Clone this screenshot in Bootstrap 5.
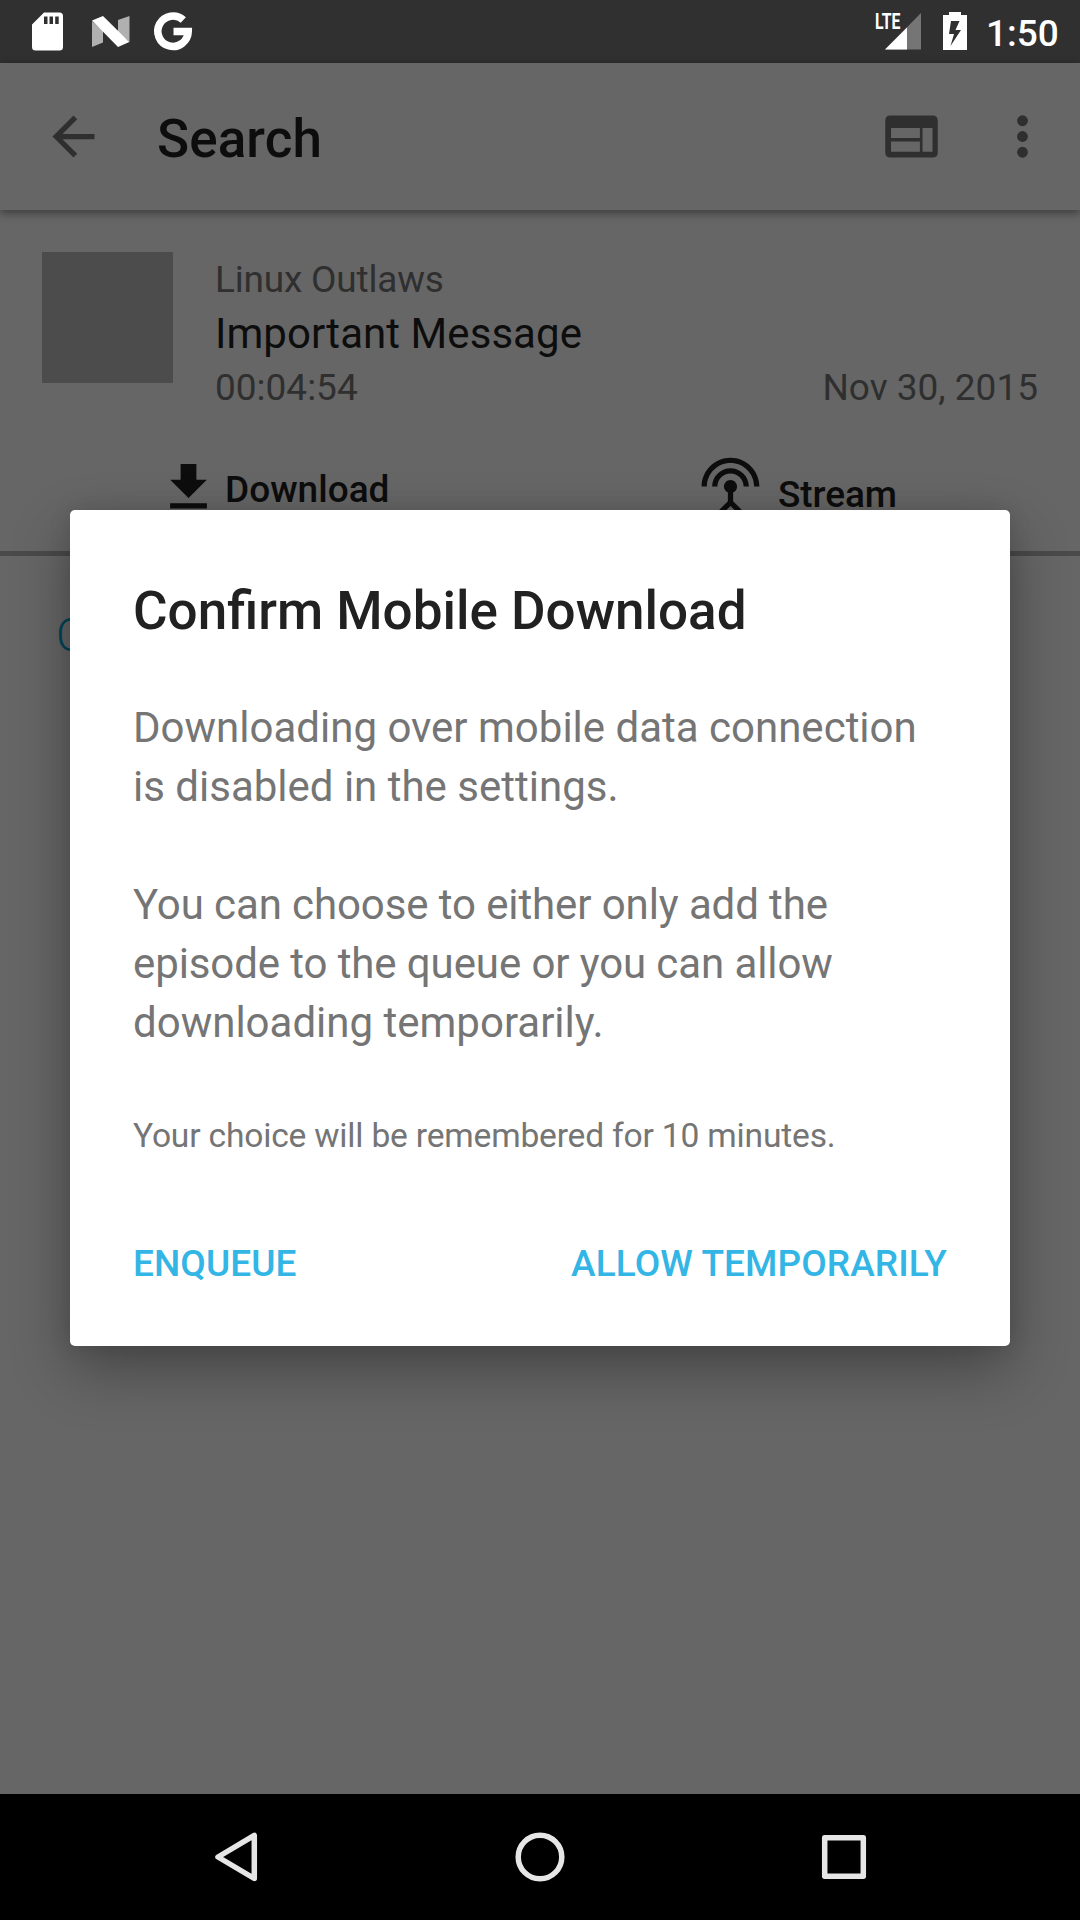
<!DOCTYPE html>
<html lang="en">
<head>
<meta charset="utf-8">
<meta name="viewport" content="width=device-width, initial-scale=1">
<title>Confirm Mobile Download</title>
<link rel="stylesheet" href="https://cdn.jsdelivr.net/npm/bootstrap@5.3.0/dist/css/bootstrap.min.css">
<style>
  body { width: 1080px; height: 1920px; overflow: hidden; background: #666; font-family: Roboto, sans-serif; color: #0d0d0d; }
  svg { display: block; flex: none; }
  .status-bar { height: 63px; background: #303030; color: #fff; padding: 0 20px 0 32px; }
  .clock { width: 74px; font-size: 37px; font-weight: 500; line-height: 43px; padding-top: 3px; margin-left: 19px; white-space: nowrap; }
  .lte { font-family: Roboto, sans-serif; }
  .app-bar { height: 147px; padding: 0 26px 0 42px; background: #666; box-shadow: 0 3px 9px rgba(0,0,0,.42); color: #2f2f2f; z-index: 1; }
  .app-title { font-size: 53px; font-weight: 500; line-height: 62px; margin: 4px 0 0 52px; color: #0d0d0d; letter-spacing: .1px; }
  .menu-dots { margin-left: 48px; }
  .episode { height: 346px; padding: 42px 42px 0; border-bottom: 5px solid #4a4a4a; }
  .cover { width: 131px; height: 131px; background: #4c4c4c; }
  .meta { padding: 6px 0 0 42px; font-size: 37px; line-height: 43px; color: #2f2f2f; }
  .meta-feed { letter-spacing: -.2px; }
  .meta-title { font-size: 42px; line-height: 50px; margin: 8px 0 7px; color: #0d0d0d; letter-spacing: .06px; }
  .actions { margin: 47px -42px 0; font-size: 37px; font-weight: 500; line-height: 43px; }
  .act-download { padding-left: 157px; }
  .act-download span { padding: 12px 0 0 5px; }
  .act-stream { padding-left: 159px; }
  .act-stream svg { margin-top: -1px; }
  .act-stream span { padding: 17px 0 0 16px; letter-spacing: -.1px; }
  .more { font-size: 46px; font-weight: 300; line-height: 54px; padding: 52px 0 0 56px; color: #00455a; }
  .screen { height: 1731px; }
  .overlay { position: absolute; inset: 63px 0 126px; padding-bottom: 1px; z-index: 5; }
  .dialog { width: 940px; height: 836px; padding: 70px 63px 0; background: #fff; border-radius: 5px; color: #757575; box-shadow: 0 24px 60px rgba(0,0,0,.32), 0 0 22px rgba(0,0,0,.12); }
  .dialog-title { font-size: 53px; font-weight: 500; line-height: 62px; margin: 0 0 56px; color: #212121; }
  .dialog-text { font-size: 42px; line-height: 59px; margin: 0 0 59px; }
  .dialog-note { font-size: 33.6px; line-height: 40px; margin: 64px 0 86px; letter-spacing: -.19px; }
  .dialog-btn { border: 0; background: none; padding: 0; color: #33b5e5; font-size: 37px; font-weight: 500; line-height: 44px; letter-spacing: .1px; text-transform: uppercase; }
  .tight { letter-spacing: -.1px; }
  .nav-keys { height: 126px; background: #000; }
</style>
</head>
<body>
<header class="status-bar d-flex align-items-center">
  <svg width="170" height="63" viewBox="32 0 170 63">
    <path fill="#fff" fill-rule="evenodd" d="M44 12.500H59.500Q63 12.500 63 16V47Q63 50.500 59.500 50.500H35.500Q32 50.500 32 47V24.500ZM44 16.500V24H47.500V16.500ZM49.500 16.500V24H53V16.500ZM55.200 16.500V24H58.700V16.500Z"/>
    <path fill="#b0b0b0" d="M92 21 103 31V42.500L92 47ZM118 20 129.500 16V42L118 32Z"/>
    <path fill="#fff" d="M92 20.500 103 16 129.300 42 118 47Z"/>
    <path fill="none" stroke="#fff" stroke-width="7.600" d="M183.300 20A15.200 15.200 0 1 0 188.200 31.500H173.500"/>
  </svg>
  <svg class="ms-auto" width="92" height="63" viewBox="875 0 92 63">
    <path fill="#757575" d="M921 13V49.500H885Z"/>
    <path fill="#fff" d="M907 27.500V49.500H885Z"/>
    <path fill="#303030" d="M874 10H901V31H874Z"/>
    <text class="lte" x="875" y="29.300" font-size="22.500" font-weight="700" textLength="25.500" lengthAdjust="spacingAndGlyphs" fill="#fff">LTE</text>
    <path fill="#fff" fill-rule="evenodd" d="M949 12H961V15H967V50H943V15H949ZM951 21 949 34H954L950.500 46 961 30H955.500L959.500 21Z"/>
  </svg>
  <span class="clock">1:50</span>
</header>

<main class="screen">
  <nav class="app-bar d-flex align-items-center position-relative">
    <svg width="63" height="63" viewBox="0 0 24 24" fill="currentColor"><path d="M20 11H7.830l5.590-5.590L12 4l-8 8 8 8 1.410-1.410L7.830 13H20v-2z"/></svg>
    <h1 class="app-title">Search</h1>
    <svg class="ms-auto" width="63" height="63" viewBox="0 0 24 24" fill="currentColor"><path fill-rule="evenodd" d="M4 4H20Q22 4 22 6V18Q22 20 20 20H4Q2 20 2 18V6Q2 4 4 4ZM4.200 8.800V12.600H15.200V8.800ZM4.200 13.900V17.800H15.200V13.900ZM16.200 8.800V17.800H20V8.800Z"/></svg>
    <svg class="menu-dots" width="63" height="63" viewBox="0 0 24 24" fill="currentColor"><circle cx="12" cy="6" r="2.050"/><circle cx="12" cy="12" r="2.050"/><circle cx="12" cy="18" r="2.050"/></svg>
  </nav>

  <section class="episode">
    <div class="d-flex">
      <div class="cover"></div>
      <div class="meta flex-grow-1">
        <div class="meta-feed">Linux Outlaws</div>
        <div class="meta-title">Important Message</div>
        <div class="d-flex justify-content-between"><span>00:04:54</span><span>Nov 30, 2015</span></div>
      </div>
    </div>
    <div class="actions row g-0">
      <div class="col-6 act-download d-flex">
        <svg width="63" height="63" viewBox="0 0 24 24" fill="currentColor"><path d="M19 9h-4V3H9v6H5l7 7 7-7zM5 18v2h14v-2H5z"/></svg>
        <span>Download</span>
      </div>
      <div class="col-6 act-stream d-flex">
        <svg width="63" height="63" viewBox="0 0 24 24" fill="currentColor"><path d="M12 5c-3.870 0-7 3.130-7 7h2c0-2.760 2.240-5 5-5s5 2.240 5 5h2c0-3.870-3.130-7-7-7zm1 9.290c.880-.390 1.500-1.260 1.500-2.290 0-1.380-1.120-2.500-2.500-2.500S9.500 10.620 9.500 12c0 1.020.620 1.900 1.500 2.290v3.300L7.590 21 9 22.410l3-3 3 3L16.410 21 13 17.590v-3.300zM12 1C5.930 1 1 5.930 1 12h2c0-4.970 4.030-9 9-9s9 4.030 9 9h2c0-6.070-4.930-11-11-11z"/></svg>
        <span>Stream</span>
      </div>
    </div>
  </section>
  <div class="more">C</div>
</main>

<footer class="nav-keys">
  <svg width="1080" height="126" viewBox="0 1794 1080 126" fill="none" stroke="#e6e6e6" stroke-width="5.500" stroke-linejoin="round">
    <path d="M254.300 1835.300V1878.500L218 1857Z"/>
    <circle cx="540" cy="1857" r="21.800"/>
    <rect x="824.700" y="1837.700" width="38.600" height="38.600"/>
  </svg>
</footer>

<div class="overlay d-flex align-items-center justify-content-center">
  <div class="dialog" role="dialog" aria-modal="true">
    <h2 class="dialog-title">Confirm Mobile Download</h2>
    <p class="dialog-text">Downloading over mobile data connection<br>is disabled in the settings.</p>
    <p class="dialog-text"><span class="tight">You can choose to either only add the<br>episode to the queue or you can allow</span><br>downloading temporarily.</p>
    <p class="dialog-note">Your choice will be remembered for 10 minutes.</p>
    <div class="d-flex justify-content-between">
      <button class="dialog-btn" type="button">Enqueue</button>
      <button class="dialog-btn" type="button">Allow temporarily</button>
    </div>
  </div>
</div>
<script src="https://cdn.jsdelivr.net/npm/bootstrap@5.3.0/dist/js/bootstrap.bundle.min.js"></script>
</body>
</html>
